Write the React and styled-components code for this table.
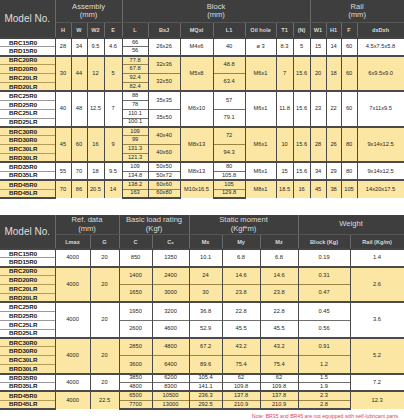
import React from 'react'
import styled, { createGlobalStyle } from 'styled-components'

const GlobalStyle = createGlobalStyle`
  html, body {
    margin: 0;
    padding: 0;
    background: #fff;
  }
  body {
    font-family: 'Liberation Sans', Arial, sans-serif;
  }
`

const YELLOW = '#fce6a3'
const HEAD = '#3e3e3e'

const Sheet = styled.div`
  width: 404px;
  display: flex;
  flex-direction: column;
`

const Table = styled.table`
  width: 404px;
  table-layout: fixed;
  border-collapse: collapse;
  margin-top: ${(p) => p.$gap || 0}px;
`

const BodyRow = styled.tr`
  height: ${(p) => p.$h}px;
  & > td {
    border-bottom: ${(p) => (p.$last ? '2px solid #4a4a4a' : 'none')};
  }
`

const GroupHead = styled.th`
  background: ${HEAD};
  color: #dcdcdc;
  font-weight: normal;
  font-size: 7.6px;
  line-height: 8.4px;
  height: ${(p) => p.$h}px;
  padding: 0;
  border-left: 1px solid #6a6a6a;
  border-right: 1px solid #6a6a6a;
  border-bottom: 1px solid #555;
  white-space: pre-line;
  vertical-align: middle;
`

const ModelHead = styled.th`
  background: ${HEAD};
  color: #dedede;
  font-weight: normal;
  font-size: 10px;
  padding: 0;
  border-right: 1px solid #6a6a6a;
  border-bottom: 2px solid #444;
`

const SubHead = styled.th`
  background: ${HEAD};
  color: #d8d8d8;
  font-weight: bold;
  font-size: 5.6px;
  height: ${(p) => p.$h}px;
  padding: 0;
  border-left: 1px solid #6a6a6a;
  border-right: 1px solid #6a6a6a;
  border-bottom: 2px solid #444;
  white-space: nowrap;
`

const ModelCell = styled.td`
  background: ${(p) => (p.$yellow ? YELLOW : '#fff')};
  color: #151515;
  font-weight: bold;
  font-size: 6.2px;
  line-height: 1;
  padding: 0 0 0 9px;
  text-align: left;
  border-right: 1px solid #4a4a4a;
  border-top: ${(p) => (p.$first ? '2px solid #4a4a4a' : `1px solid ${p.$yellow ? '#b49c5c' : '#9a9a9a'}`)};
  white-space: nowrap;
`

const Cell = styled.td`
  background: ${(p) => (p.$yellow ? YELLOW : '#fff')};
  color: #262626;
  font-size: 5.7px;
  line-height: 1;
  padding: 0;
  text-align: center;
  vertical-align: middle;
  border-left: 1px solid #4a4a4a;
  border-right: 1px solid #4a4a4a;
  border-top: ${(p) => (p.$first ? '2px solid #4a4a4a' : `1px solid ${p.$yellow ? '#9c8446' : '#6e6e6e'}`)};
  white-space: nowrap;
`

const Note = styled.div`
  color: #e2425c;
  font-size: 5.2px;
  line-height: 6px;
  text-align: right;
  padding: 3px 6px 0 0;
`

// each column: a string (spans the whole group) or an array of
// strings (one row each) / [value, span] pairs
const blockGroups = [
  {
    yellow: false,
    models: ['BRC15R0', 'BRD15R0'],
    cols: ['28', '34', '9.5', '4.6', ['66', '56'], '26x26', 'M4x6', '40', 'ø 3', '8.3', '5', '15', '14', '60', '4.5x7.5x5.8'],
  },
  {
    yellow: true,
    models: ['BRC20R0', 'BRD20R0', 'BRC20LR', 'BRD20LR'],
    cols: ['30', '44', '12', '5', ['77.8', '67.8', '92.4', '82.4'], [['32x36', 2], ['32x50', 2]], 'M5x8', [['48.8', 2], ['63.4', 2]], 'M6x1', '7', '15.6', '20', '18', '60', '6x9.5x9.0'],
  },
  {
    yellow: false,
    models: ['BRC25R0', 'BRD25R0', 'BRC25LR', 'BRD25LR'],
    cols: ['40', '48', '12.5', '7', ['88', '78', '110.1', '100.1'], [['35x35', 2], ['35x50', 2]], 'M6x10', [['57', 2], ['79.1', 2]], 'M6x1', '11.8', '15.6', '23', '22', '60', '7x11x9.5'],
  },
  {
    yellow: true,
    models: ['BRC30R0', 'BRD30R0', 'BRC30LR', 'BRD30LR'],
    cols: ['45', '60', '16', '9', ['109', '99', '131.3', '121.3'], [['40x40', 2], ['40x60', 2]], 'M8x13', [['72', 2], ['94.3', 2]], 'M6x1', '10', '15.6', '28', '26', '80', '9x14x12.5'],
  },
  {
    yellow: false,
    models: ['BRD35R0', 'BRD35LR'],
    cols: ['55', '70', '18', '9.5', ['109', '134.8'], ['50x50', '50x72'], 'M8x13', ['80', '105.8'], 'M6x1', '15', '15.6', '34', '29', '80', '9x14x12.5'],
  },
  {
    yellow: true,
    models: ['BRD45R0', 'BRD45LR'],
    cols: ['70', '86', '20.5', '14', ['138.2', '163'], ['60x60', '60x80'], 'M10x16.5', ['105', '129.8'], 'M8x1', '18.5', '16', '45', '38', '105', '14x20x17.5'],
  },
]

const pair = (a, b) => [[a, 2], [b, 2]]

const loadGroups = [
  {
    yellow: false,
    models: ['BRC15R0', 'BRD15R0'],
    cols: ['4000', '20', '850', '1350', '10.1', '6.8', '6.8', '0.19', '1.4'],
  },
  {
    yellow: true,
    models: ['BRC20R0', 'BRD20R0', 'BRC20LR', 'BRD20LR'],
    cols: ['4000', '20', pair('1400', '1650'), pair('2400', '3000'), pair('24', '30'), pair('14.6', '23.8'), pair('14.6', '23.8'), pair('0.31', '0.47'), '2.6'],
  },
  {
    yellow: false,
    models: ['BRC25R0', 'BRD25R0', 'BRC25LR', 'BRD25LR'],
    cols: ['4000', '20', pair('1950', '2600'), pair('3200', '4600'), pair('36.8', '52.9'), pair('22.8', '45.5'), pair('22.8', '45.5'), pair('0.45', '0.56'), '3.6'],
  },
  {
    yellow: true,
    models: ['BRC30R0', 'BRD30R0', 'BRC30LR', 'BRD30LR'],
    cols: ['4000', '20', pair('2850', '3600'), pair('4800', '6400'), pair('67.2', '89.6'), pair('43.2', '75.4'), pair('43.2', '75.4'), pair('0.91', '1.2'), '5.2'],
  },
  {
    yellow: false,
    models: ['BRD35R0', 'BRD35LR'],
    cols: ['4000', '20', ['3850', '4800'], ['6200', '8300'], ['105.4', '141.1'], ['62', '109.8'], ['62', '109.8'], ['1.5', '1.9'], '7.2'],
  },
  {
    yellow: true,
    models: ['BRD45R0', 'BRD45LR'],
    cols: ['4000', '22.5', ['6500', '7700'], ['10500', '13000'], ['236.3', '292.5'], ['137.8', '210.9'], ['137.8', '210.9'], ['2.3', '2.8'], '12.3'],
  },
]

// turn a column spec into { rowIndex: [value, span] }
const cellsOf = (col, n) => {
  if (typeof col === 'string') return { 0: [col, n] }
  const out = {}
  let r = 0
  col.forEach((c) => {
    const [v, s] = typeof c === 'string' ? [c, 1] : c
    out[r] = [v, s]
    r += s
  })
  return out
}

const GroupRows = ({ group, isLast, rowH }) => {
  const n = group.models.length
  const maps = group.cols.map((c) => cellsOf(c, n))
  return group.models.map((model, r) => (
    <BodyRow key={model} $h={rowH} $last={isLast && r === n - 1}>
      <ModelCell $yellow={group.yellow} $first={r === 0}>
        {model}
      </ModelCell>
      {maps.map((m, i) =>
        m[r] ? (
          <Cell key={i} rowSpan={m[r][1]} $yellow={group.yellow} $first={r === 0}>
            {m[r][0]}
          </Cell>
        ) : null
      )}
    </BodyRow>
  ))
}

const blockWidths = [55, 16, 16, 17, 18, 26, 32, 33, 32, 31, 17, 17, 16, 15, 16, 47]
const loadWidths = [55, 35, 29, 33, 37, 33, 38, 38, 52, 54]

const Cols = ({ widths }) => (
  <colgroup>
    {widths.map((w, i) => (
      <col key={i} style={{ width: w }} />
    ))}
  </colgroup>
)

const BlockTable = () => (
  <Table>
    <Cols widths={blockWidths} />
    <thead>
      <tr>
        <ModelHead rowSpan={2}>Model No.</ModelHead>
        <GroupHead colSpan={4} $h={22}>{'Assembly\n(mm)'}</GroupHead>
        <GroupHead colSpan={7} $h={22}>{'Block\n(mm)'}</GroupHead>
        <GroupHead colSpan={4} $h={22}>{'Rail\n(mm)'}</GroupHead>
      </tr>
      <tr>
        {['H', 'W', 'W2', 'E', 'L', 'BxJ', 'MQxl', 'L1', 'Oil hole', 'T1', '(N)', 'W1', 'H1', 'F', 'dxDxh'].map((h) => (
          <SubHead key={h} $h={14}>
            {h}
          </SubHead>
        ))}
      </tr>
    </thead>
    <tbody>
      {blockGroups.map((g, i) => (
        <GroupRows key={i} group={g} rowH={8.9} isLast={i === blockGroups.length - 1} />
      ))}
    </tbody>
  </Table>
)

const LoadTable = () => (
  <Table $gap={16}>
    <Cols widths={loadWidths} />
    <thead>
      <tr>
        <ModelHead rowSpan={2}>Model No.</ModelHead>
        <GroupHead colSpan={2} $h={19}>{'Ref. data\n(mm)'}</GroupHead>
        <GroupHead colSpan={2} $h={19}>{'Basic load rating\n(Kgf)'}</GroupHead>
        <GroupHead colSpan={3} $h={19}>{'Static moment\n(Kgf*m)'}</GroupHead>
        <GroupHead colSpan={2} $h={19}>Weight</GroupHead>
      </tr>
      <tr>
        {['Lmax', 'G', 'C', 'C₀', 'Mx', 'My', 'Mz', 'Block (Kg)', 'Rail (Kg/m)'].map((h) => (
          <SubHead key={h} $h={13}>
            {h}
          </SubHead>
        ))}
      </tr>
    </thead>
    <tbody>
      {loadGroups.map((g, i) => (
        <GroupRows key={i} group={g} rowH={8.9} isLast={i === loadGroups.length - 1} />
      ))}
    </tbody>
  </Table>
)

const App = () => (
  <Sheet>
    <GlobalStyle />
    <BlockTable />
    <LoadTable />
    <Note>Note: BR35 and BR45 are not equipped with self-lubricant parts</Note>
  </Sheet>
)

export default App
